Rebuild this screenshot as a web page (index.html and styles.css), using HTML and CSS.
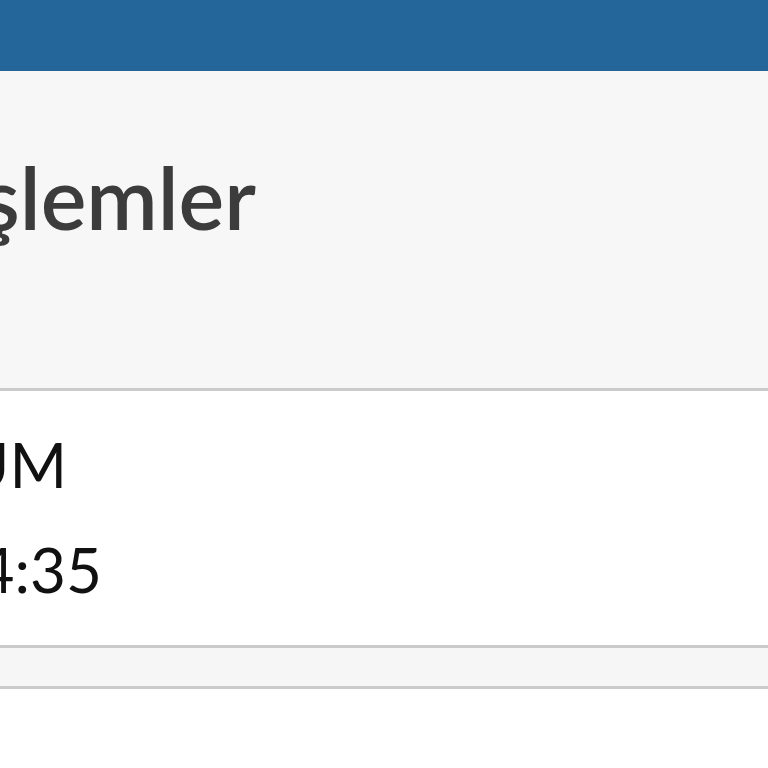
FILE: index.html
```html
<!DOCTYPE html>
<html lang="tr">
<head>
<meta charset="utf-8">
<link rel="stylesheet" href="styles.css">
</head>
<body>
<div class="topbar"></div>
<div class="head">
  <div class="line title-line"><h1 class="title">İşlemler</h1></div>
</div>
<div class="row">
  <div class="line l1"><span class="txt">DURUM</span></div>
  <div class="line l2"><span class="txt">14:35</span></div>
</div>
<div class="strip"></div>
</body>
</html>
```
FILE: styles.css
```css
html, body { margin: 0; padding: 0; background: #ffffff; overflow: hidden; }
body { font-family: Lato, "Noto Sans", sans-serif; width: 768px; height: 768px; }
.topbar { height: 71px; background: #246699; }
.head { height: 317px; background: #f7f7f7; border-bottom: 3px solid #cbcbcb; box-sizing: content-box; }
.line { display: flex; justify-content: flex-end; white-space: nowrap; }
.title-line { width: 256px; padding-top: 76px; }
.title { margin: 0; font-size: 86px; font-weight: 600; color: #3c3c3c; line-height: 100px; letter-spacing: 0; }
.row { height: 254px; background: #fff; border-bottom: 3px solid #cbcbcb; }
.l1 { width: 67px; padding-top: 36px; }
.l2 { width: 102px; padding-top: 30px; }
.txt { font-size: 62px; line-height: 75px; color: #111; }
.strip { height: 38px; background: #f6f6f6; border-bottom: 3px solid #cbcbcb; }
```
